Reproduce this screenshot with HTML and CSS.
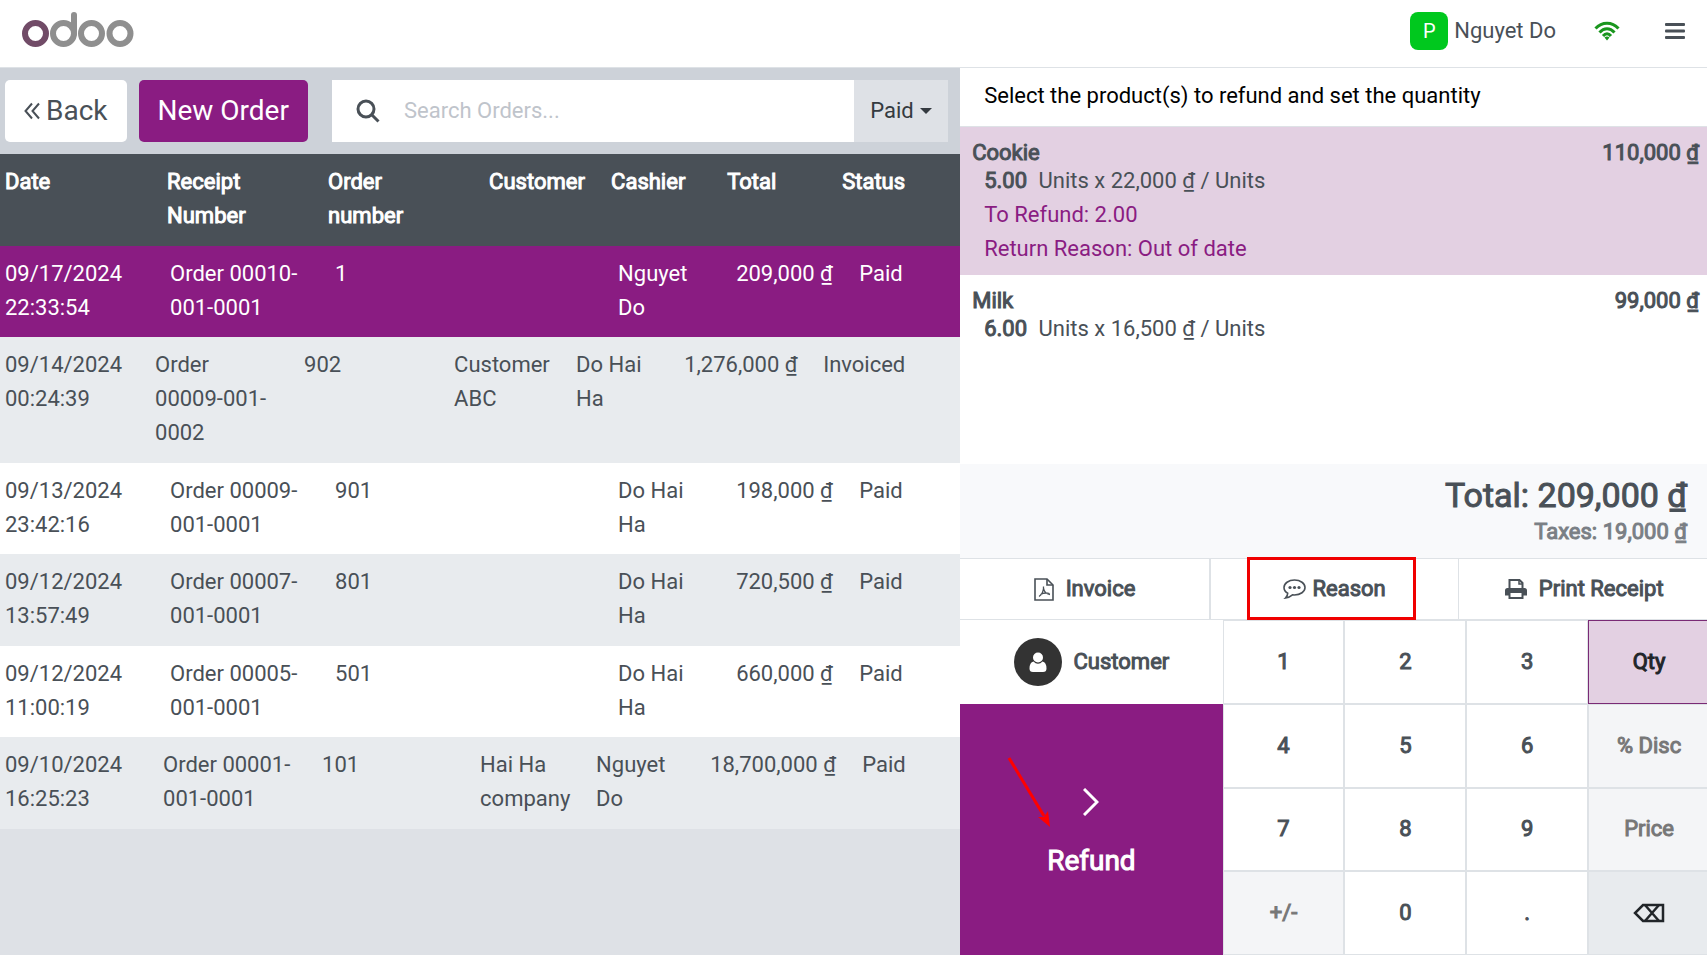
FILE: index.html
```html
<!DOCTYPE html>
<html lang="en">
<head>
  <meta charset="UTF-8">
  <meta name="viewport" content="width=device-width, initial-scale=1.0">
  <title>Odoo POS</title>
  <link rel="stylesheet" href="styles.css">
</head>
<body>
  <!-- Header -->
  <header class="pos-topheader">
    <svg class="logo" width="112" height="36" viewBox="0 0 112 36" fill="none" stroke="#8f8f8f" stroke-width="6" role="img" aria-label="odoo">
      <circle cx="13.5" cy="21.5" r="10.5" stroke="#714b67"/>
      <circle cx="41.5" cy="21.5" r="10.5"/>
      <path d="M52 21.5V3" stroke-linecap="round"/>
      <circle cx="69.5" cy="21.5" r="10.5"/>
      <circle cx="98" cy="21.5" r="10.5"/>
    </svg>
    <div class="status-buttons">
      <button class="cashier-name"><span class="avatar">P</span>Nguyet Do</button>
      <button aria-label="Connection status">
        <svg width="26" height="20" viewBox="0 0 26 20" fill="none" stroke="#1a961e" stroke-width="3">
          <path d="M1.5 7.5C8 .5 18 .5 24.5 7.5"/>
          <path d="M5.5 11.5C10 6.5 16 6.5 20.5 11.5"/>
          <path d="M9 15C11.5 12 14.5 12 17 15"/>
          <path d="M10.5 16.5Q13 14.5 15.5 16.5L13 19.5Z" fill="#1a961e" stroke="none"/>
        </svg>
      </button>
      <button class="menu" aria-label="Menu">
        <svg width="20" height="16" viewBox="0 0 20 16" fill="#495057">
          <rect width="20" height="3" rx="1"/>
          <rect y="6.5" width="20" height="3" rx="1"/>
          <rect y="13" width="20" height="3" rx="1"/>
        </svg>
      </button>
    </div>
  </header>

  <main class="ticket-screen">
    <!-- Orders -->
    <section class="left-pane">
      <div class="controls">
        <button class="btn back">
          <svg width="16" height="18" viewBox="0 0 16 18" fill="none" stroke="currentColor" stroke-width="2">
            <path d="M8 1.5L1.5 9L8 16.5M15 1.5L8.5 9L15 16.5"/>
          </svg>
          Back
        </button>
        <button class="btn highlight">New Order</button>
        <div class="search-bar">
          <label class="search-field">
            <svg width="24" height="24" viewBox="0 0 24 24" fill="none" stroke="#495057" stroke-width="3">
              <circle cx="10" cy="10" r="8"/>
              <path d="M16 16L22.5 22.5"/>
            </svg>
            <input type="text" placeholder="Search Orders..." aria-label="Search Orders">
          </label>
          <div class="filter">
            <select aria-label="Order status">
              <option>Paid</option>
            </select>
            <svg width="12" height="6" viewBox="0 0 12 6" fill="#343a40"><path d="M0 0H12L6 6Z"/></svg>
          </div>
        </div>
      </div>

      <table class="orders">
        <thead>
          <tr>
            <th>Date</th>
            <th>Receipt Number</th>
            <th>Order number</th>
            <th>Customer</th>
            <th>Cashier</th>
            <th>Total</th>
            <th>Status</th>
          </tr>
        </thead>
        <tbody>
          <tr class="selected">
            <td>09/17/2024 22:33:54</td>
            <td>Order 00010-<wbr>001-<wbr>0001</td>
            <td>1</td>
            <td></td>
            <td>Nguyet Do</td>
            <td>209,000 ₫</td>
            <td>Paid</td>
          </tr>
          <tr class="invoiced">
            <td>09/14/2024 00:24:39</td>
            <td>Order 00009-<wbr>001-<wbr>0002</td>
            <td>902</td>
            <td>Customer ABC</td>
            <td>Do Hai Ha</td>
            <td>1,276,000 ₫</td>
            <td>Invoiced</td>
          </tr>
          <tr>
            <td>09/13/2024 23:42:16</td>
            <td>Order 00009-<wbr>001-<wbr>0001</td>
            <td>901</td>
            <td></td>
            <td>Do Hai Ha</td>
            <td>198,000 ₫</td>
            <td>Paid</td>
          </tr>
          <tr>
            <td>09/12/2024 13:57:49</td>
            <td>Order 00007-<wbr>001-<wbr>0001</td>
            <td>801</td>
            <td></td>
            <td>Do Hai Ha</td>
            <td>720,500 ₫</td>
            <td>Paid</td>
          </tr>
          <tr>
            <td>09/12/2024 11:00:19</td>
            <td>Order 00005-<wbr>001-<wbr>0001</td>
            <td>501</td>
            <td></td>
            <td>Do Hai Ha</td>
            <td>660,000 ₫</td>
            <td>Paid</td>
          </tr>
          <tr class="company">
            <td>09/10/2024 16:25:23</td>
            <td>Order 00001-<wbr>001-<wbr>0001</td>
            <td>101</td>
            <td>Hai Ha company</td>
            <td>Nguyet Do</td>
            <td>18,700,000 ₫</td>
            <td>Paid</td>
          </tr>
        </tbody>
      </table>
    </section>

    <!-- Order detail -->
    <section class="right-pane">
      <p class="help">Select the product(s) to refund and set the quantity</p>

      <ul class="orderlines">
        <li class="orderline selected">
          <div class="product"><span>Cookie</span><span>110,000 ₫</span></div>
          <div class="info"><strong>5.00</strong> Units x 22,000 ₫ / Units</div>
          <div class="note">
            <div>To Refund: 2.00</div>
            <div>Return Reason: Out of date</div>
          </div>
        </li>
        <li class="orderline">
          <div class="product"><span>Milk</span><span>99,000 ₫</span></div>
          <div class="info"><strong>6.00</strong> Units x 16,500 ₫ / Units</div>
        </li>
      </ul>

      <div class="summary">
        <div class="total">Total: 209,000 ₫</div>
        <div class="taxes">Taxes: 19,000 ₫</div>
      </div>

      <div class="control-buttons">
        <button>
          <svg width="20" height="23" viewBox="0 0 20 23" fill="none" stroke="currentColor" stroke-width="1.6">
            <path d="M1 1H13L19 7V22H1Z"/>
            <path d="M13 1V7H19"/>
            <path d="M5 18.5C8 17 10 12 9.5 8.5M9.5 10C10 14 12 16 16 16.5M6.5 16.5C9 15 12 14.5 15.5 15.5" stroke-width="1.3"/>
          </svg>
          Invoice
        </button>
        <button class="reason">
          <svg width="23" height="20" viewBox="0 0 23 20" fill="none" stroke="currentColor" stroke-width="2">
            <path d="M11.5 1C17.5 1 22 4.5 22 8.5S17.5 16 11.5 16L9.5 15.9C7.5 17.6 5 18.7 2.5 19C4 17.5 4.7 16 4.7 14.3C2.5 13 1 11 1 8.5C1 4.5 5.5 1 11.5 1Z" stroke-width="1.6"/>
            <g fill="currentColor" stroke="none">
              <circle cx="7" cy="8.5" r="1.6"/>
              <circle cx="11.5" cy="8.5" r="1.6"/>
              <circle cx="16" cy="8.5" r="1.6"/>
            </g>
          </svg>
          Reason
        </button>
        <button>
          <svg width="22" height="20" viewBox="0 0 22 20" fill="none" stroke="currentColor" stroke-width="2">
            <path d="M4.5 10V1H14.5L17.5 4V10"/>
            <path d="M14 1V5H17.5" stroke-width="1.5"/>
            <path d="M0 11.5Q0 9 2.5 9H19.5Q22 9 22 11.5V16.5H17.5V14H4.5V16.5H0Z" fill="currentColor" stroke="none"/>
            <path d="M4.5 14V19H17.5V14"/>
          </svg>
          Print Receipt
        </button>
      </div>

      <div class="pads">
        <div class="actionpad">
          <button class="set-partner">
            <span class="partner-icon">
              <svg width="18" height="20" viewBox="0 0 18 20" fill="#fff">
                <path d="M4.5 9.5Q6.5 11.8 9 11.8T13.500 9.500Q17.500 10.500 17.500 16.500Q17.500 20 14 20H4Q.5 20 .5 16.500Q.5 10.500 4.500 9.500Z"/>
                <circle cx="9" cy="5.5" r="5"/>
              </svg>
            </span>
            Customer
          </button>
          <button class="validation">
            <svg width="16" height="28" viewBox="0 0 16 28" fill="none" stroke="currentColor" stroke-width="3">
              <path d="M1 1L14 14L1 27"/>
            </svg>
            Refund
            <svg class="arrow" width="44" height="72" viewBox="0 0 44 72">
              <path d="M2 2L37 60" stroke="#f00" stroke-width="3"/>
              <path d="M43 71L31 61L37 61L41 55Z" fill="#f00"/>
            </svg>
          </button>
        </div>
        <div class="numpad">
          <button>1</button>
          <button>2</button>
          <button>3</button>
          <button class="mode active">Qty</button>
          <button>4</button>
          <button>5</button>
          <button>6</button>
          <button class="mode">% Disc</button>
          <button>7</button>
          <button>8</button>
          <button>9</button>
          <button class="mode">Price</button>
          <button class="mode">+/-</button>
          <button>0</button>
          <button>.</button>
          <button class="backspace" aria-label="Backspace">
            <svg width="32" height="20" viewBox="0 0 32 20" fill="none" stroke="currentColor" stroke-width="2.5">
              <path d="M10 2H30V18H10L2 10Z"/>
              <path d="M12 2L26 18M26 2L12 18"/>
            </svg>
          </button>
        </div>
      </div>
    </section>
  </main>
</body>
</html>
```

FILE: styles.css
```css
/* Global Styles */
* {
  margin: 0;
  padding: 0;
  box-sizing: border-box;
}

body {
  height: 100vh;
  display: flex;
  flex-direction: column;
  font-family: Roboto, sans-serif;
  font-size: 22px;
  line-height: 34px;
  color: #495057;
  background: #fff;
  overflow: hidden;
}

button,
input,
select {
  font: inherit;
  color: inherit;
  background: none;
  border: none;
}

button {
  cursor: pointer;
}

ul {
  list-style: none;
}

/* Bold text: regular face thickened with a stroke */
.orders th,
.orderline .product,
.orderline .info strong,
.summary,
.control-buttons button,
.set-partner,
.validation,
.numpad button {
  font-weight: 400;
  -webkit-text-stroke: 1px currentColor;
}

/* Header */
.pos-topheader {
  display: flex;
  justify-content: space-between;
  align-items: center;
  height: 68px;
  padding: 0 22px 6px;
  border-bottom: 1px solid #dee2e6;
}

.logo {
  margin-bottom: 2px;
}

.status-buttons {
  display: flex;
  align-items: center;
}

.status-buttons button {
  display: flex;
  align-items: center;
}

.status-buttons .cashier-name {
  gap: 6px;
  margin-right: 38px;
}

.status-buttons .menu {
  margin-left: 45px;
}

.avatar {
  width: 38px;
  height: 38px;
  line-height: 38px;
  font-size: 20px;
  text-align: center;
  color: #fff;
  background: #00c81e;
  border-radius: 8px;
}

/* Ticket screen */
.ticket-screen {
  flex: 1;
  display: flex;
  min-height: 0;
}

.left-pane {
  width: 56.25%;
  background: #dee1e6;
}

.right-pane {
  flex: 1;
  display: flex;
  flex-direction: column;
}

/* Controls */
.controls {
  display: flex;
  gap: 12px;
  padding: 12px 12px 12px 5px;
  background: #cdd2d9;
}

.btn {
  display: flex;
  align-items: center;
  gap: 6px;
  height: 62px;
  padding: 0 19px;
  font-size: 28px;
  white-space: nowrap;
  background: #fff;
  border-radius: 5px;
}

.btn.highlight {
  color: #fff;
  background: #8a1c82;
}

.search-bar {
  flex: 1;
  display: flex;
  margin-left: 12px;
  background: #fff;
}

.search-field {
  flex: 1;
  display: flex;
  align-items: center;
  gap: 24px;
  padding-left: 24px;
}

.search-field input {
  flex: 1;
  outline: none;
}

.search-field input::placeholder {
  color: #bfc4cb;
}

.filter {
  display: flex;
  align-items: center;
  gap: 6px;
  padding: 0 16px;
  color: #343a40;
  background: #dee1e6;
}

.filter select {
  appearance: none;
  outline: none;
}

/* Orders */
.orders {
  display: block;
}

.orders thead,
.orders tbody {
  display: block;
}

.orders tr {
  display: grid;
  grid-template-columns: 165fr 165fr 165fr 118fr 118fr 123fr 101fr;
  padding: 11px 0 12px 5px;
  background: #fff;
}

.orders thead tr {
  grid-template-columns: 162fr 161fr 161fr 122fr 116fr 115fr 118fr;
  padding-bottom: 13px;
  color: #fff;
  background: #495057;
}

.orders tbody tr:nth-child(even) {
  padding-bottom: 13px;
  background: #e8ebee;
}

.orders tbody tr.selected {
  color: #fff;
  background: #8a1c82;
}

.orders tr.invoiced {
  grid-template-columns: 150fr 149fr 150fr 122fr 108fr 139fr 137fr;
}

.orders tr.company {
  grid-template-columns: 158fr 159fr 158fr 116fr 114fr 152fr 98fr;
}

.orders th,
.orders td {
  padding-right: 22px;
  text-align: left;
}

.orders th:nth-child(3) {
  padding-right: 48px;
}

.orders td:nth-child(6) {
  white-space: nowrap;
}

/* Order lines */
.help {
  padding: 11px 24px 13px;
  color: #000;
}

.orderlines {
  flex: 1;
  border-top: 1px solid #dee2e6;
}

.orderline {
  padding: 12px 8px 9px 12px;
}

.orderline.selected {
  background: #e3d0e2;
}

.orderline .product {
  display: flex;
  justify-content: space-between;
  line-height: 28px;
}

.orderline .info {
  padding-left: 12px;
  line-height: 28px;
}

.orderline .info strong {
  margin-right: 6px;
}

.orderline .note {
  margin-top: 3px;
  padding-left: 12px;
  color: #8a1c82;
}

.summary {
  padding: 10px 20px;
  text-align: right;
  background: #f8f9fb;
}

.summary .total {
  font-size: 34px;
  line-height: 42px;
}

.summary .taxes {
  line-height: 32px;
  color: #7a7f85;
}

/* Control buttons */
.control-buttons {
  display: grid;
  grid-template-columns: repeat(3, 1fr);
  height: 62px;
  margin-right: -2px;
  border-top: 1px solid #dee2e6;
  border-bottom: 1px solid #dee2e6;
}

.control-buttons button {
  position: relative;
  display: flex;
  align-items: center;
  justify-content: center;
  gap: 12px;
  border-right: 1px solid #dee2e6;
}

.control-buttons button:last-child {
  border-right: none;
}

.control-buttons .reason {
  gap: 6px;
  border-left: 1px solid #dee2e6;
}

/* Red frame over the Reason button */
.reason::after {
  content: "";
  position: absolute;
  inset: -2px 42px -1px 36px;
  border: 3px solid #f00000;
}

/* Pads */
.pads {
  display: grid;
  grid-template-columns: 35% 65%;
  height: 335px;
  margin-right: -3px;
}

.actionpad {
  display: grid;
  grid-template-rows: 1fr 3fr;
}

.set-partner {
  display: flex;
  align-items: center;
  justify-content: center;
  gap: 12px;
}

.partner-icon {
  display: flex;
  align-items: center;
  justify-content: center;
  width: 48px;
  height: 48px;
  background: #333;
  border-radius: 50%;
}

.validation {
  position: relative;
  display: flex;
  flex-direction: column;
  align-items: center;
  justify-content: center;
  gap: 28px;
  padding-top: 8px;
  font-size: 28px;
  color: #fff;
  background: #8a1c82;
}

.arrow {
  position: absolute;
  left: 18%;
  top: 52px;
}

.numpad {
  display: grid;
  grid-template-columns: repeat(4, 1fr);
  grid-template-rows: repeat(4, 1fr);
}

.numpad button {
  display: flex;
  align-items: center;
  justify-content: center;
  border: 1px solid #dee2e6;
}

.numpad .mode {
  color: #777;
  background: #f4f5f7;
}

.numpad .mode.active {
  color: #212529;
  background: #e3d0e2;
  border-color: #7a2a75;
}

.numpad .backspace {
  color: #212529;
  background: #e8ebee;
}
```
